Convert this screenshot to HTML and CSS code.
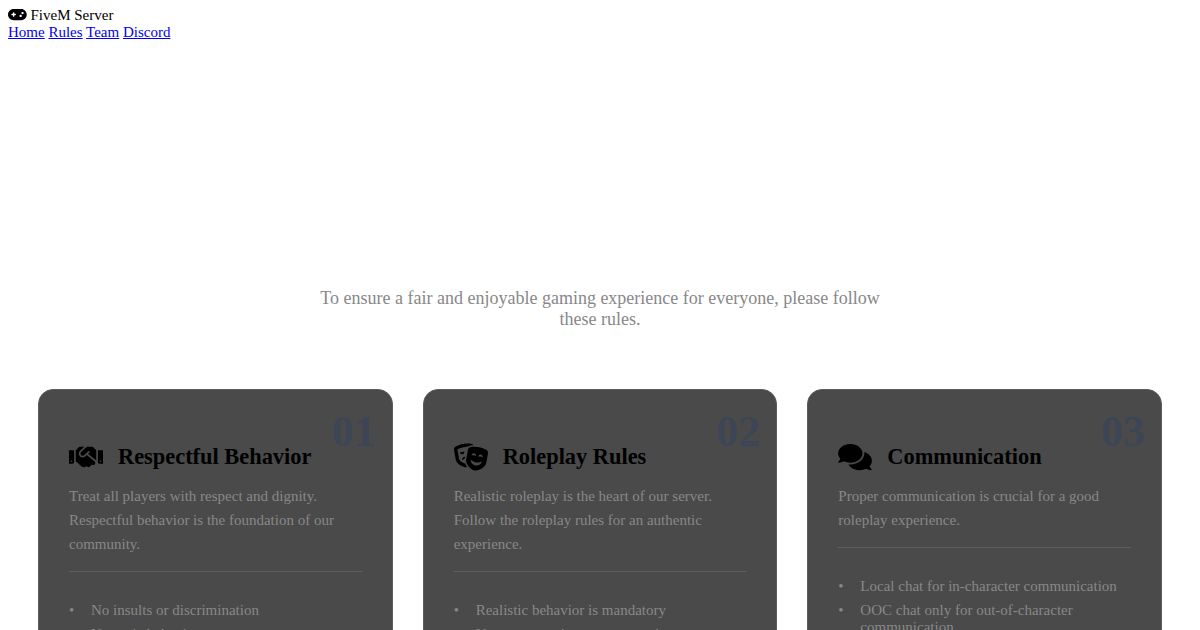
FILE: index.html
```html
<!DOCTYPE html>
<html lang="en">
<head>
  <meta charset="UTF-8" />
  <meta name="viewport" content="width=device-width, initial-scale=1.0"/>
  <title>Rules | FiveM Server</title>
  <link rel="stylesheet" href="styles.css">
</head>
<body>
  <header>
    <div class="logo">
      <svg class="logo-icon" viewBox="0 0 640 512"><path d="M192 64C86 64 0 150 0 256S86 448 192 448H448c106 0 192-86 192-192s-86-192-192-192H192zM496 248c-22.1 0-40-17.9-40-40s17.9-40 40-40s40 17.9 40 40s-17.9 40-40 40zm-24 56c0 22.1-17.9 40-40 40s-40-17.9-40-40s17.9-40 40-40s40 17.9 40 40zM168 200c0-13.3 10.7-24 24-24s24 10.7 24 24v32h32c13.3 0 24 10.7 24 24s-10.7 24-24 24H216v32c0 13.3-10.7 24-24 24s-24-10.7-24-24V280H136c-13.3 0-24-10.7-24-24s10.7-24 24-24h32V200z"/></svg>
      FiveM Server
    </div>
    <nav>
      <a href="#">Home</a>
      <a href="#">Rules</a>
      <a href="#">Team</a>
      <a href="#">Discord</a>
    </nav>
  </header>

  <section class="hero">
    <p>To ensure a fair and enjoyable gaming experience for everyone, please follow these rules.</p>
  </section>

  <section class="rules">
    <article class="card">
      <span class="number">01</span>
      <h3>
        <svg class="card-icon" viewBox="0 0 640 512"><path d="M434.7 64h-85.9c-8 0-15.7 3-21.6 8.4l-98.3 90c-.1.1-.2.3-.3.4-16.6 15.6-16.3 40.5-2.1 56 12.7 13.9 39.4 17.6 56.1 2.7.1-.1.3-.1.4-.2l79.9-73.2c6.5-5.9 16.7-5.5 22.6 1 6 6.5 5.5 16.6-1 22.6l-26.1 23.9L504 313.8c2.9 2.4 5.5 5 7.9 7.7V128l-54.6-54.6c-5.9-6-14.1-9.4-22.6-9.4zM544 128.2v223.9c0 17.7 14.3 32 32 32h64V128.2h-96zm48 223.9c-8.8 0-16-7.2-16-16s7.2-16 16-16 16 7.2 16 16-7.2 16-16 16zM0 384h64c17.7 0 32-14.3 32-32V128.2H0V384zm48-63.9c8.8 0 16 7.2 16 16s-7.2 16-16 16-16-7.2-16-16c0-8.9 7.2-16 16-16zm435.9 18.6L334.6 217.5l-30 27.5c-29.7 27.1-75.2 24.5-101.7-4.4-26.9-29.4-24.8-74.9 4.4-101.7L289.1 64h-83.8c-8.5 0-16.6 3.4-22.6 9.4L128 128v223.9h18.3l90.5 81.9c27.4 22.3 67.7 18.1 90-9.3l.2-.2 17.9 15.5c15.9 13 39.4 10.5 52.3-5.4l31.4-38.6 5.4 4.4c13.7 11.1 33.9 9.1 45-4.7l9.5-11.7c11.2-13.8 9.1-33.9-4.6-45.1z"/></svg>
        Respectful Behavior
      </h3>
      <p>Treat all players with respect and dignity. Respectful behavior is the foundation of our community.</p>
      <ul>
        <li>No insults or discrimination</li>
        <li>No toxic behavior</li>
      </ul>
    </article>

    <article class="card">
      <span class="number">02</span>
      <h3>
        <svg class="card-icon" viewBox="0 0 640 512"><path d="M206.86 245.15c-35.88 10.45-59.95 41.2-57.53 74.1 11.4-12.72 28.81-23.7 49.9-30.92l7.63-43.18zM95.81 295L64.08 115.49c-.29-1.62.28-2.62.24-2.65 57.76-32.06 123.12-49.01 189.01-49.01 1.61 0 3.23.17 4.85.19 13.95-13.47 31.73-22.83 51.59-26 18.89-3.02 38.05-4.55 57.18-5.32-9.99-13.95-24.48-24.23-41.77-27C301.27 1.89 277.24 0 253.32 0 176.66 0 101.02 19.42 33.2 57.06 9.03 70.48-3.92 98.48 1.05 126.58l31.73 179.51c14.23 80.52 136.33 142.08 204.45 142.08 3.59 0 6.75-.46 10.01-.8-13.52-17.08-28.94-40.48-39.5-67.58-47.61-12.98-106.06-51.62-111.93-84.79zm97.55-137.46c-.73-4.12-2.23-7.87-4.07-11.4-8.25 8.91-20.67 15.75-35.32 18.32-14.65 2.58-28.67.4-39.48-5.17-.52 3.94-.64 7.98.09 12.1 3.84 21.7 24.58 36.19 46.34 32.37 21.75-3.82 36.28-24.52 32.44-46.22zM606.8 120.9c-88.98-49.38-191.43-67.41-291.98-51.35-27.31 4.36-49.08 26.26-54.04 54.36l-31.73 179.51c-15.39 87.05 95.28 196.27 158.31 207.35 63.03 11.09 204.47-53.79 219.86-140.84l31.73-179.51c4.97-28.11-7.98-56.11-32.15-69.52zm-273.24 96.8c3.84-21.7 24.58-36.19 46.34-32.36 21.76 3.83 36.28 24.52 32.45 46.22-.73 4.12-2.23 7.87-4.07 11.4-8.25-8.91-20.67-15.75-35.32-18.32-14.65-2.58-28.67-.4-39.48 5.17-.53-3.95-.65-7.99.08-12.11zm70.47 198.76c-55.68-9.79-93.52-59.27-89.04-112.9 20.6 25.54 56.21 46.17 99.49 53.78 43.28 7.61 83.82.37 111.93-16.6-14.18 51.94-66.71 85.51-122.38 75.72zm130.3-151.34c-8.25-8.91-20.68-15.75-35.33-18.32-14.65-2.58-28.67-.4-39.48 5.17-.52-3.94-.64-7.98.09-12.1 3.84-21.7 24.58-36.19 46.34-32.37 21.75 3.83 36.28 24.52 32.45 46.22-.73 4.13-2.23 7.88-4.07 11.4z"/></svg>
        Roleplay Rules
      </h3>
      <p>Realistic roleplay is the heart of our server. Follow the roleplay rules for an authentic experience.</p>
      <ul>
        <li>Realistic behavior is mandatory</li>
        <li>No powergaming or metagaming</li>
      </ul>
    </article>

    <article class="card">
      <span class="number">03</span>
      <h3>
        <svg class="card-icon" viewBox="0 0 576 512"><path d="M416 192c0-88.4-93.1-160-208-160S0 103.6 0 192c0 34.3 14.1 65.9 38 92-13.4 30.2-35.5 54.2-35.8 54.5-2.2 2.3-2.8 5.7-1.5 8.7S4.8 352 8 352c36.6 0 66.9-12.3 88.7-25 32.2 15.7 70.3 25 111.3 25 114.9 0 208-71.6 208-160zm122 220c23.9-26 38-57.7 38-92 0-66.9-53.5-124.2-129.3-148.1.9 6.6 1.3 13.3 1.3 20.1 0 105.9-107.7 192-240 192-10.8 0-21.3-.8-31.7-1.9C207.8 439.6 281.8 480 368 480c41 0 79.1-9.2 111.3-25 21.8 12.7 52.1 25 88.7 25 3.2 0 6.1-1.9 7.3-4.8 1.3-2.9.7-6.3-1.5-8.7-.3-.3-22.4-24.2-35.8-54.5z"/></svg>
        Communication
      </h3>
      <p>Proper communication is crucial for a good roleplay experience.</p>
      <ul>
        <li>Local chat for in-character communication</li>
        <li>OOC chat only for out-of-character communication</li>
      </ul>
    </article>
  </section>
</body>
</html>
```

FILE: styles.css
```css
html {
  overflow: hidden;
  height: 630px;
}

body {
  margin: 7px 8px 8px;
  background: #fff;
  color: #000;
  font-family: "Liberation Serif", "Times New Roman", serif;
  font-size: 15px;
}

.logo-icon {
  width: 18.75px;
  height: 15px;
  vertical-align: -2px;
}

.hero {
  padding: 247px 30px 0;
}

.hero p {
  width: 600px;
  margin: 0 auto;
  color: #888;
  font-size: 18px;
  line-height: 21px;
  text-align: center;
}

.rules {
  display: grid;
  grid-template-columns: repeat(3, 1fr);
  gap: 30px;
  padding: 59px 30px;
}

.card {
  position: relative;
  padding: 30px;
  background: #4a4a4a;
  border: 1px solid #5c5c5c;
  border-radius: 15px;
}

.number {
  position: absolute;
  top: 16px;
  right: 16px;
  color: #3c4655;
  font-size: 44px;
  font-weight: bold;
}

.card h3 {
  display: flex;
  align-items: center;
  gap: 15px;
  margin: 22px 0 12px;
  font-size: 22.4px;
  line-height: 28px;
}

.card-icon {
  flex: none;
  width: 34px;
  height: 30px;
}

.card p {
  margin: 0;
  padding-bottom: 15px;
  border-bottom: 1px solid #5e5e5e;
  color: #888;
  line-height: 24px;
}

.card ul {
  margin: 30px 0 0;
  padding: 0;
  list-style: none;
  color: #888;
}

.card li {
  position: relative;
  padding-left: 22px;
  margin-bottom: 7px;
  line-height: 17px;
}

.card li::before {
  content: "•";
  position: absolute;
  left: 0;
}
```
